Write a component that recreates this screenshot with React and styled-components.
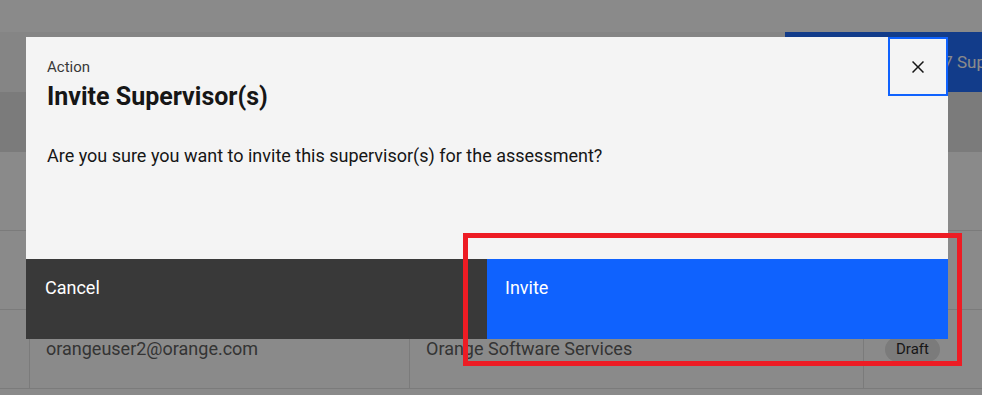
import React from "react";
import styled, { createGlobalStyle } from "styled-components";

const Global = createGlobalStyle`
  html, body { margin: 0; padding: 0; background: #ffffff; }
  body { font-family: Roboto, "Liberation Sans", sans-serif; overflow: hidden; }
  * { box-sizing: border-box; }
`;

const Page = styled.div`
  width: 982px;
  height: 395px;
  overflow: hidden;
  display: flex;
  flex-direction: column;
`;

const TopBar = styled.div`
  height: 32px;
  background: #ffffff;
  flex-shrink: 0;
`;

const Toolbar = styled.div`
  height: 60px;
  background: #f4f4f4;
  display: flex;
  justify-content: flex-end;
  flex-shrink: 0;
`;

const PrimaryAction = styled.button`
  width: 197px;
  height: 60px;
  border: 0;
  background: #0f62fe;
  color: #ffffff;
  font: 400 17px/24px Roboto, "Liberation Sans", sans-serif;
  text-align: left;
  padding: 0 0 0 113px;
  white-space: nowrap;
  overflow: hidden;
`;

const Table = styled.div`
  display: grid;
  grid-template-columns: 29px 380px 454px 1fr;
`;

const HeadCell = styled.div`
  height: 60px;
  background: #e0e0e0;
`;

const Cell = styled.div`
  height: 79px;
  border-bottom: 1px solid #e0e0e0;
  border-left: ${(p) => (p.$first ? "0" : "1px solid #e0e0e0")};
  padding: 0 16px;
  display: flex;
  align-items: center;
  font: 400 18px/24px Roboto, "Liberation Sans", sans-serif;
  color: #525252;
  white-space: nowrap;
`;

const Tag = styled.span`
  display: inline-flex;
  align-items: center;
  height: 25px;
  padding: 0 11px;
  margin-left: 5px;
  border-radius: 13px;
  background: #e0e0e0;
  color: #161616;
  font: 400 15px/20px Roboto, "Liberation Sans", sans-serif;
`;

const Overlay = styled.div`
  position: fixed;
  inset: 0;
  background: rgba(22, 22, 22, 0.5);
`;

const Modal = styled.div`
  position: absolute;
  left: 26px;
  top: 37px;
  width: 922px;
  height: 302px;
  background: #f4f4f4;
  display: flex;
  flex-direction: column;
`;

const Header = styled.div`
  display: flex;
  justify-content: space-between;
  align-items: flex-start;
`;

const HeaderText = styled.div`
  padding: 20px 0 0 21px;
  display: flex;
  flex-direction: column;
  gap: 4px;
`;

const Label = styled.div`
  font: 400 15px/20px Roboto, "Liberation Sans", sans-serif;
  color: #393939;
`;

const Title = styled.h2`
  margin: 0;
  font: 700 25px/32px Roboto, "Liberation Sans", sans-serif;
  color: #161616;
`;

const CloseButton = styled.button`
  width: 60px;
  height: 59px;
  border: 2px solid #0f62fe;
  background: transparent;
  display: flex;
  align-items: center;
  justify-content: center;
  padding: 0;
  color: #161616;
`;

const Body = styled.p`
  margin: 31px 0 0 0;
  padding: 0 21px;
  flex: 1;
  font: 400 18px/24px Roboto, "Liberation Sans", sans-serif;
  color: #161616;
`;

const Footer = styled.div`
  display: grid;
  grid-template-columns: 461px 1fr;
  height: 80px;
`;

const FooterButton = styled.button`
  border: 0;
  margin: 0;
  text-align: left;
  padding: 17px ${(p) => (p.$primary ? "18px" : "19px")} 0;
  display: flex;
  align-items: flex-start;
  background: ${(p) => (p.$primary ? "#0f62fe" : "#393939")};
  color: #ffffff;
  font: 400 18px/24px Roboto, "Liberation Sans", sans-serif;
`;

const Annotation = styled.div`
  position: absolute;
  left: 463px;
  top: 233px;
  width: 499px;
  height: 133px;
  border: 5px solid #ed1c24;
  pointer-events: none;
`;

const rows = [
  { id: 1 },
  { id: 2 },
  { id: 3, email: "orangeuser2@orange.com", org: "Orange Software Services", status: "Draft" },
];

function CloseIcon() {
  return (
    <svg width="24" height="24" viewBox="0 0 32 32" fill="currentColor" aria-hidden="true">
      <path d="M17.4141 16L24 9.4141 22.5859 8 16 14.5859 9.4143 8 8 9.4141 14.5859 16 8 22.5859 9.4143 24 16 17.4141 22.5859 24 24 22.5859 17.4141 16z" />
    </svg>
  );
}

export default function App() {
  return (
    <>
      <Global />
      <Page>
        <TopBar />
        <Toolbar>
          <PrimaryAction>Invite 7 Supervisors</PrimaryAction>
        </Toolbar>
        <Table>
          <HeadCell />
          <HeadCell />
          <HeadCell />
          <HeadCell />
          {rows.map((r) => (
            <React.Fragment key={r.id}>
              <Cell $first />
              <Cell>{r.email}</Cell>
              <Cell>{r.org}</Cell>
              <Cell>{r.status && <Tag>{r.status}</Tag>}</Cell>
            </React.Fragment>
          ))}
        </Table>
      </Page>
      <Overlay>
        <Modal role="dialog" aria-label="Invite Supervisor(s)">
          <Header>
            <HeaderText>
              <Label>Action</Label>
              <Title>Invite Supervisor(s)</Title>
            </HeaderText>
            <CloseButton aria-label="Close">
              <CloseIcon />
            </CloseButton>
          </Header>
          <Body>Are you sure you want to invite this supervisor(s) for the assessment?</Body>
          <Footer>
            <FooterButton>Cancel</FooterButton>
            <FooterButton $primary>Invite</FooterButton>
          </Footer>
        </Modal>
      </Overlay>
      <Annotation />
    </>
  );
}
